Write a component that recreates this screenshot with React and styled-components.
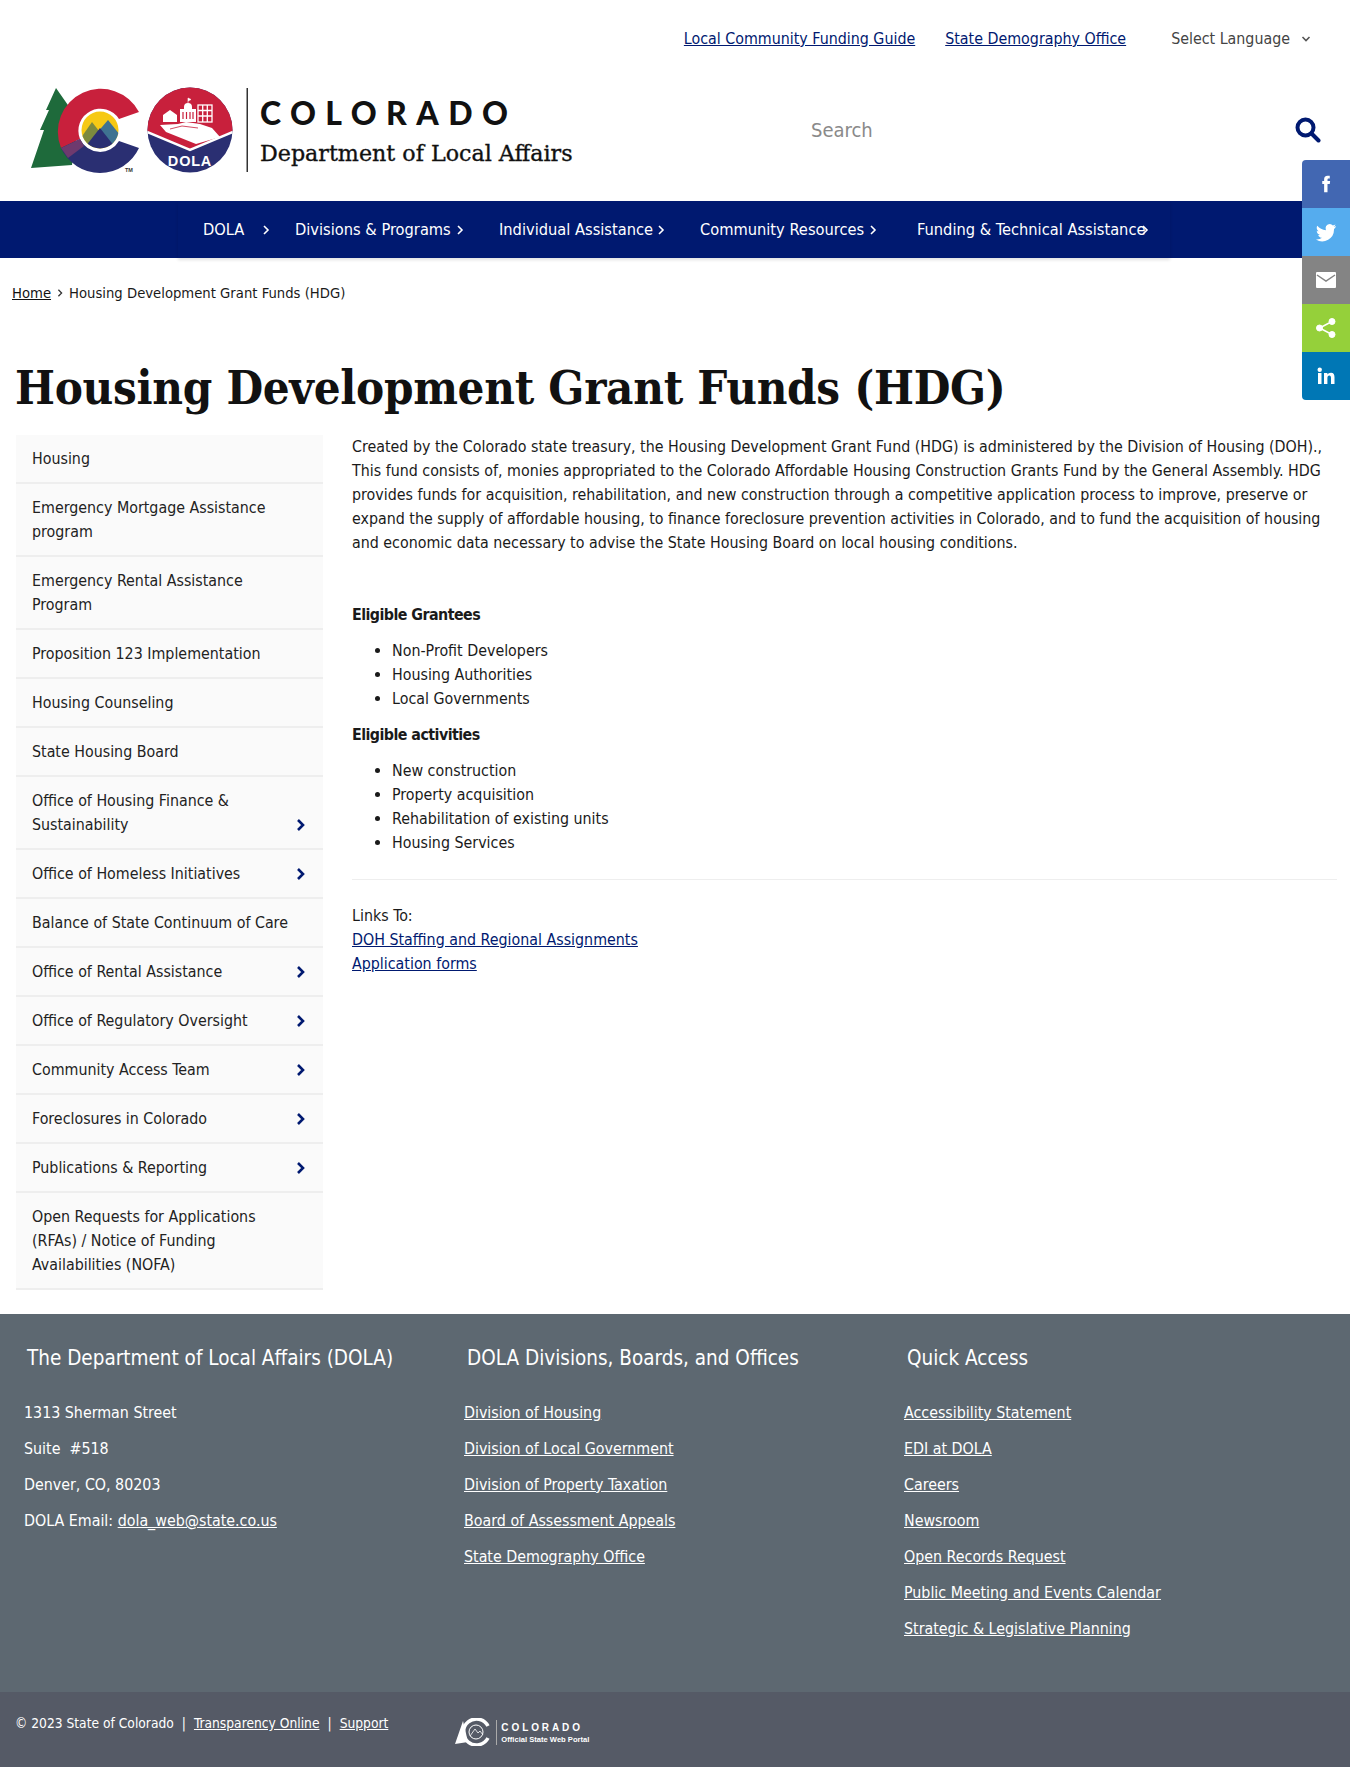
import React from "react";
import styled, { createGlobalStyle } from "styled-components";

const NAVY = "#001970";
const SANS = '"DejaVu Sans Condensed", "DejaVu Sans", sans-serif';
const SLAB = '"DejaVu Serif Condensed", "DejaVu Serif", serif';

const Global = createGlobalStyle`
  html, body { margin: 0; padding: 0; background: #fff; }
  body { font-family: ${SANS}; font-size: 15.85px; line-height: 24px; color: #1a1a1a; }
  * { box-sizing: border-box; }
`;

const Page = styled.div`
  position: relative;
  width: 1350px;
  height: 1767px;
  overflow: hidden;
  display: flex;
  flex-direction: column;
`;

const TopBar = styled.div`
  height: 76px;
  display: flex;
  align-items: center;
  justify-content: flex-end;
  padding: 2px 39px 0 0;
  a { color: ${NAVY}; text-decoration: underline; margin-right: 30px; }
`;

const LanguagePicker = styled.div`
  display: flex;
  align-items: center;
  color: #444;
  margin-left: 15px;
  gap: 11px;
`;

const Header = styled.div`
  height: 125px;
  display: flex;
  align-items: flex-start;
  padding: 10px 0 0 28px;
`;

const Wordmark = styled.div`
  display: flex;
  flex-direction: column;
  margin-left: 7px;
  padding-top: 8px;
`;

const WordTop = styled.div`
  font-family: Lato, sans-serif;
  font-weight: 900;
  font-size: 32px;
  line-height: 38px;
  letter-spacing: 9.4px;
  color: #111;
`;

const WordBottom = styled.div`
  font-family: "DejaVu Serif", serif;
  font-size: 22.2px;
  line-height: 32px;
  margin-top: 5px;
  color: #111;
  -webkit-text-stroke: 0.35px #111;
`;

const SearchBox = styled.div`
  margin-left: auto;
  margin-top: 14px;
  width: 510px;
  margin-right: 29px;
  display: flex;
  align-items: center;
  justify-content: space-between;
  height: 60px;
  font-size: 20px;
  color: #8a8a8a;
`;

const Nav = styled.nav`
  background: ${NAVY};
  height: 57px;
`;

const NavInner = styled.div`
  margin-left: 178px;
  width: 992px;
  height: 57px;
  display: flex;
  align-items: center;
  padding-left: 25px;
  box-shadow: 0 2px 3px rgba(0, 0, 0, 0.12);
`;

const NavItem = styled.div`
  flex: none;
  width: ${(p) => p.$w}px;
  display: flex;
  align-items: center;
  color: #fff;
  font-size: 16.3px;
  svg { margin-left: ${(p) => p.$gap}px; flex: none; }
`;

const Crumbs = styled.div`
  padding: 23px 0 0 12px;
  height: 99px;
  font-size: 14.7px;
  display: flex;
  align-items: flex-start;
  gap: 5px;
  a { color: #111; text-decoration: underline; }
  svg { margin-top: 8px; }
`;

const Title = styled.h1`
  margin: 0;
  padding-left: 15px;
  height: 80px;
  font-family: ${SLAB};
  font-weight: 700;
  font-size: 47px;
  letter-spacing: -0.3px;
  line-height: 62px;
  color: #111;
`;

const Columns = styled.div`
  display: flex;
  padding-left: 16px;
  height: 877px;
`;

const Side = styled.div`
  width: 307px;
  flex: none;
  margin-top: -2px;
`;

const SideRow = styled.div`
  background: #fafafa;
  border-bottom: 2px solid #eeeeee;
  padding: 12px 28px 11px 16px;
  position: relative;
  line-height: 24px;
  color: #222;
`;

const SideArrow = styled.svg`
  position: absolute;
  right: 17px;
  bottom: 17px;
`;

const Main = styled.div`
  margin: -2px 0 0 29px;
  width: 985px;
  line-height: 24px;
  color: #1a1a1a;
  p { margin: 0; }
  a { color: ${NAVY}; text-decoration: underline; }
`;

const Lead = styled.p`
  margin-bottom: 48px !important;
`;

const SubHead = styled.div`
  font-weight: 700;
  letter-spacing: -0.55px;
`;

const Bullets = styled.ul`
  margin: 12px 0;
  padding-left: 40px;
`;

const Rule = styled.hr`
  border: 0;
  border-top: 1px solid #eee;
  margin: 24px 0;
`;

const Footer = styled.footer`
  background: #5d6871;
  height: 378px;
  display: grid;
  grid-template-columns: 440px 440px 1fr;
  padding: 29px 0 0 24px;
  color: #fff;
`;

const FootHead = styled.div`
  font-size: 20.5px;
  line-height: 30px;
  padding-left: 3px;
  margin-bottom: 22px;
`;

const FootLine = styled.div`
  height: 36px;
  line-height: 36px;
  white-space: pre-wrap;
  a { color: #fff; text-decoration: underline; }
`;

const Legal = styled.div`
  background: #555a66;
  height: 75px;
  display: flex;
  align-items: flex-start;
  padding: 19px 0 0 15px;
  font-size: 13.7px;
  color: #fff;
  a { color: #fff; text-decoration: underline; }
  span { margin: 0 8px; }
`;

const PortalMark = styled.div`
  display: flex;
  align-items: center;
  margin-left: 66px;
  margin-top: 3px;
  height: 36px;
`;

const PortalText = styled.div`
  margin-left: 4px;
  border-left: 1px solid #aaa;
  padding-left: 4px;
  font-family: "Liberation Sans", sans-serif;
  font-weight: 700;
`;

const PortalName = styled.div`
  font-size: 10px;
  letter-spacing: 2.9px;
  line-height: 15px;
`;

const PortalSub = styled.div`
  font-size: 7.6px;
  line-height: 10px;
`;

const ShareBar = styled.div`
  position: absolute;
  top: 160px;
  right: 0;
  width: 48px;
  border-radius: 4px 0 0 4px;
  overflow: hidden;
`;

const ShareButton = styled.div`
  height: 48px;
  background: ${(p) => p.$bg};
  display: flex;
  align-items: center;
  justify-content: center;
`;

const navItems = [
  ["DOLA", 92, 17],
  ["Divisions & Programs", 204, 4],
  ["Individual Assistance", 201, 3],
  ["Community Resources", 217, 4],
  ["Funding & Technical Assistance", 240, -5],
];

const sideItems = [
  ["Housing"],
  ["Emergency Mortgage Assistance program"],
  ["Emergency Rental Assistance Program"],
  ["Proposition 123 Implementation"],
  ["Housing Counseling"],
  ["State Housing Board"],
  ["Office of Housing Finance & Sustainability", true],
  ["Office of Homeless Initiatives", true],
  ["Balance of State Continuum of Care"],
  ["Office of Rental Assistance", true],
  ["Office of Regulatory Oversight", true],
  ["Community Access Team", true],
  ["Foreclosures in Colorado", true],
  ["Publications & Reporting", true],
  ["Open Requests for Applications (RFAs) / Notice of Funding Availabilities (NOFA)"],
];

const footCols = [
  {
    head: "The Department of Local Affairs (DOLA)",
    lines: ["1313 Sherman Street", "Suite  #518", "Denver, CO, 80203"],
  },
  {
    head: "DOLA Divisions, Boards, and Offices",
    links: ["Division of Housing", "Division of Local Government", "Division of Property Taxation", "Board of Assessment Appeals", "State Demography Office"],
  },
  {
    head: "Quick Access",
    links: ["Accessibility Statement", "EDI at DOLA", "Careers", "Newsroom", "Open Records Request", "Public Meeting and Events Calendar", "Strategic & Legislative Planning"],
  },
];

const Chevron = ({ size = 10, color = "#fff", width = 1.6, down }) => (
  <svg width={size} height={size} viewBox="0 0 10 10" fill="none" stroke={color} strokeWidth={width}>
    <path d={down ? "M1.500 3l3.500 3.500L8.500 3" : "M3 1l4 4-4 4"} />
  </svg>
);

const Logo = () => (
  <svg width="225" height="88" viewBox="28 86 225 88">
    <defs>
      <clipPath id="peak"><circle cx="100" cy="130" r="18.5" /></clipPath>
      <clipPath id="seal"><circle cx="190" cy="130" r="42.500" /></clipPath>
    </defs>
    <polygon points="56,88 46,110 49,110 40,130 44,130 31,168 72,165 78,120 70,108" fill="#1e6a3b" />
    <path d="M61 148A43 43 0 0 1 139 112L119 119A22 22 0 0 0 80 139Z" fill="#c8203c" />
    <path d="M61 148A43 43 0 0 0 139 148L119 141A22 22 0 0 1 80 139Z" fill="#2a2f72" />
    <path d="M61 148L80 139 84 146 68 158Z" fill="#6e3a6e" />
    <g clipPath="url(#peak)">
      <rect x="80" y="110" width="40" height="40" fill="#f6c914" />
      <polygon points="78,142 92,122 106,140 90,150" fill="#7c8a3e" />
      <polygon points="96,134 108,120 124,140 110,148" fill="#3f7391" />
      <polygon points="78,156 100,128 122,156" fill="#2a2f72" />
    </g>
    <text x="125" y="172" fontFamily="Liberation Sans, sans-serif" fontSize="5.500" fontWeight="700" fill="#333">TM</text>
    <g clipPath="url(#seal)">
      <rect x="147" y="87" width="86" height="86" fill="#2a2f72" />
      <polygon points="147,87 233,87 233,131 190,149 147,131" fill="#c8203c" />
      <polyline points="147,132 190,150 233,132" fill="none" stroke="#fff" strokeWidth="2.500" />
    </g>
    <path d="M163 122v-7l7-5 7 5v7z" fill="#fff" />
    <path d="M180 122v-13h4v-2a4 4 0 0 1 8 0v2h4v13z" fill="#fff" />
    <path d="M188 103v-5l3 1.500-3 1.500" fill="#fff" stroke="#fff" strokeWidth="0.600" />
    <path d="M183 112v7M186.500 112v7M190 112v7M193 112v7" stroke="#c8203c" strokeWidth="1.200" />
    <g fill="none" stroke="#fff" strokeWidth="1.300">
      <rect x="198" y="105" width="14" height="17" />
      <path d="M202.700 105v17M207.300 105v17M198 110.500h14M198 116h14" />
    </g>
    <polygon points="160,125 178,124 186,122 200,124 212,128 220,137 196,144 166,132" fill="#fff" />
    <path d="M170 129l12-3 16 2" fill="none" stroke="#c8203c" strokeWidth="0.800" />
    <text x="190" y="166" textAnchor="middle" fontFamily="Liberation Sans, sans-serif" fontSize="14.500" fontWeight="700" letterSpacing="0.800" fill="#fff">DOLA</text>
    <rect x="246.500" y="88" width="1.500" height="84" fill="#333" />
  </svg>
);

const Search = () => (
  <svg width="26" height="26" viewBox="0 0 26 26" fill="none" stroke={NAVY} strokeWidth="4">
    <circle cx="10.500" cy="10.500" r="8" />
    <path d="M16.500 16.500l7 7" strokeLinecap="round" />
  </svg>
);

const App = () => (
  <Page>
    <Global />
    <TopBar>
      <a>Local Community Funding Guide</a>
      <a>State Demography Office</a>
      <LanguagePicker>
        Select Language
        <Chevron color="#555" down />
      </LanguagePicker>
    </TopBar>
    <Header>
      <Logo />
      <Wordmark>
        <WordTop>COLORADO</WordTop>
        <WordBottom>Department of Local Affairs</WordBottom>
      </Wordmark>
      <SearchBox>
        Search
        <Search />
      </SearchBox>
    </Header>
    <Nav>
      <NavInner>
        {navItems.map(([label, w, gap]) => (
          <NavItem key={label} $w={w} $gap={gap}>
            {label}
            <Chevron />
          </NavItem>
        ))}
      </NavInner>
    </Nav>
    <Crumbs>
      <a>Home</a>
      <Chevron size={8} color="#333" />
      Housing Development Grant Funds (HDG)
    </Crumbs>
    <Title>Housing Development Grant Funds (HDG)</Title>
    <Columns>
      <Side>
        {sideItems.map(([label, more]) => (
          <SideRow key={label}>
            {label}
            {more && (
              <SideArrow width="10" height="12" viewBox="0 0 10 12" fill="none" stroke={NAVY} strokeWidth="2.600">
                <path d="M2 1l5 5-5 5" />
              </SideArrow>
            )}
          </SideRow>
        ))}
      </Side>
      <Main>
        <Lead>
          Created by the Colorado state treasury, the Housing Development Grant Fund (HDG) is administered by the Division of Housing (DOH)., This fund consists of, monies appropriated to the Colorado Affordable Housing Construction Grants Fund by the General Assembly. HDG provides funds for acquisition, rehabilitation, and new construction through a competitive application process to improve, preserve or expand the supply of affordable housing, to finance foreclosure prevention activities in Colorado, and to fund the acquisition of housing and economic data necessary to advise the State Housing Board on local housing conditions.
        </Lead>
        <SubHead>Eligible Grantees</SubHead>
        <Bullets>
          <li>Non-Profit Developers</li>
          <li>Housing Authorities</li>
          <li>Local Governments</li>
        </Bullets>
        <SubHead>Eligible activities</SubHead>
        <Bullets>
          <li>New construction</li>
          <li>Property acquisition</li>
          <li>Rehabilitation of existing units</li>
          <li>Housing Services</li>
        </Bullets>
        <Rule />
        <p>Links To:</p>
        <p><a>DOH Staffing and Regional Assignments</a></p>
        <p><a>Application forms</a></p>
      </Main>
    </Columns>
    <Footer>
      {footCols.map((col) => (
        <div key={col.head}>
          <FootHead>{col.head}</FootHead>
          {col.lines && col.lines.map((l) => <FootLine key={l}>{l}</FootLine>)}
          {col.lines && <FootLine>DOLA Email: <a>dola_web@state.co.us</a></FootLine>}
          {col.links && col.links.map((l) => <FootLine key={l}><a>{l}</a></FootLine>)}
        </div>
      ))}
    </Footer>
    <Legal>
      © 2023 State of Colorado<span>|</span><a>Transparency Online</a><span>|</span><a>Support</a>
      <PortalMark>
        <svg width="38" height="28" viewBox="0 0 38 28" fill="none" stroke="#fff">
          <path d="M1 26L9 3l5 21z" fill="#fff" stroke="none" />
          <path d="M34 8a13 13 0 1 0 0 12" strokeWidth="3.500" />
          <circle cx="22" cy="14" r="7" strokeWidth="1" />
          <path d="M16 18l5-7 3 4 2-2 3 4" strokeWidth="0.800" />
        </svg>
        <PortalText>
          <PortalName>COLORADO</PortalName>
          <PortalSub>Official State Web Portal</PortalSub>
        </PortalText>
      </PortalMark>
    </Legal>
    <ShareBar>
      <ShareButton $bg="#4267b2">
        <svg width="18" height="18" viewBox="0 0 24 24" fill="#fff"><path d="M14 8V6c0-1 .5-1.500 1.500-1.500H17V1h-3c-3 0-4.500 2-4.500 4.500V8H7v4h2.500v11H14V12h3l.5-4z" /></svg>
      </ShareButton>
      <ShareButton $bg="#55acee">
        <svg width="22" height="22" viewBox="0 0 24 24" fill="#fff"><path d="M23 5.500c-.8.400-1.700.600-2.600.700.900-.600 1.600-1.400 2-2.500-.900.500-1.800.900-2.900 1.100A4.500 4.500 0 0 0 11.800 9c0 .400 0 .700.100 1C8.100 9.800 4.800 8 2.500 5.200c-1.200 2-.600 4.600 1.400 6-.700 0-1.400-.200-2-.600 0 2.200 1.500 4.100 3.600 4.500-.700.200-1.400.200-2 .100.600 1.800 2.300 3.100 4.200 3.100A9 9 0 0 1 1 20.200 12.800 12.800 0 0 0 20.700 8.800c.900-.700 1.700-1.500 2.300-3.300z" /></svg>
      </ShareButton>
      <ShareButton $bg="#848484">
        <svg width="20" height="16" viewBox="0 0 20 16"><rect width="20" height="16" rx="1" fill="#fff" /><path d="M1 3l9 6 9-6" fill="none" stroke="#848484" strokeWidth="1.500" /></svg>
      </ShareButton>
      <ShareButton $bg="#95d03a">
        <svg width="20" height="20" viewBox="0 0 20 20" fill="#fff" stroke="#fff"><circle cx="16" cy="3.500" r="3" /><circle cx="3.500" cy="10" r="3" /><circle cx="16" cy="16.500" r="3" /><path d="M16 3.500L3.500 10 16 16.500" fill="none" strokeWidth="1.500" /></svg>
      </ShareButton>
      <ShareButton $bg="#0077b5">
        <svg width="18" height="18" viewBox="0 0 18 18" fill="#fff"><rect x="1" y="6" width="3.500" height="11" /><circle cx="2.700" cy="2.700" r="2.200" /><path d="M7 6h3.400v1.600C11 6.500 12.300 5.700 14 5.700c2.700 0 3.500 1.800 3.500 4.500V17H14v-6c0-1.500-.4-2.500-1.700-2.500s-1.900 1-1.900 2.500v6H7z" /></svg>
      </ShareButton>
    </ShareBar>
  </Page>
);

export default App;
